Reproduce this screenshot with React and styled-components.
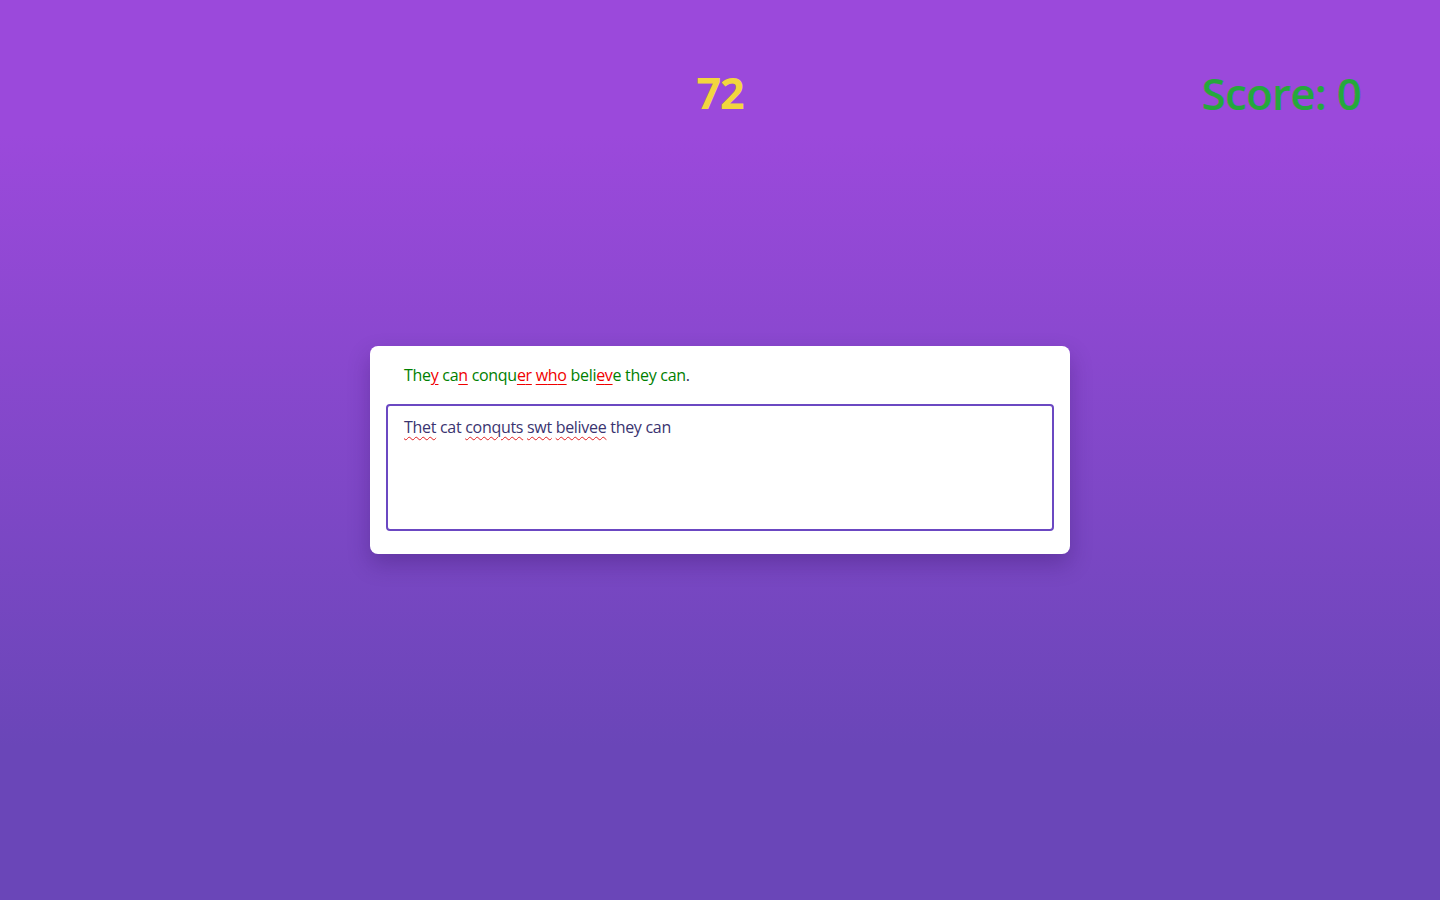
import React from "react";
import styled, { createGlobalStyle } from "styled-components";

const GlobalStyle = createGlobalStyle`
  * {
    box-sizing: border-box;
  }
  body {
    margin: 0;
    font-family: "Open Sans", "Noto Sans", sans-serif;
    color: #333;
  }
`

const Page = styled.div`
  min-height: 100vh;
  display: grid;
  grid-template-rows: 1fr auto 1fr;
  justify-items: center;
  background: linear-gradient(to bottom, #9b49db 15%, #6a46b8 83%);
`

const Header = styled.header`
  align-self: start;
  width: 100%;
  display: grid;
  grid-template-columns: 1fr auto 1fr;
  align-items: center;
  padding: 64px 80px 0;
`

const Timer = styled.div`
  grid-column: 2;
  font-size: 43px;
  font-weight: 700;
  line-height: 58px;
  letter-spacing: -1px;
  color: #f2d63f;
`

const Score = styled.div`
  justify-self: end;
  margin-right: -1px;
  font-size: 44px;
  font-weight: 600;
  line-height: 58px;
  letter-spacing: -0.8px;
  color: #25a83c;
`

const Card = styled.div`
  width: 700px;
  background: #fff;
  border-radius: 8px;
  padding: 16px 16px 23px;
  box-shadow: 0 10px 22px rgba(40, 10, 80, 0.28);
`

const Quote = styled.div`
  padding: 0 18px;
  margin-bottom: 16px;
  font-size: 16px;
  line-height: 26px;
  letter-spacing: -0.3px;
  color: #2f2b55;
`

const Char = styled.span`
  color: ${(p) => (p.$state === "correct" ? "#008000" : p.$state === "wrong" ? "#f00000" : "inherit")};
  text-decoration: ${(p) => (p.$state === "wrong" ? "underline" : "none")};
  text-underline-offset: 3px;
`

const InputBox = styled.div`
  height: 127px;
  border: 2px solid #6b48c2;
  border-radius: 4px;
  padding: 9px 16px;
  font-size: 16px;
  line-height: 24px;
  letter-spacing: -0.3px;
  color: #3a3470;
`

const Word = styled.span`
  text-decoration: ${(p) => (p.$misspelled ? "underline wavy #e02020" : "none")};
  text-decoration-thickness: 1px;
  text-underline-offset: 3px;
`

const quote = "They can conquer who believe they can.";
const typed = "Thet cat conquts swt belivee they can";
const misspelled = ["Thet", "conquts", "swt", "belivee"];

export default function App() {
  const words = typed.split(" ");
  return (
    <>
      <GlobalStyle />
      <Page>
        <Header>
          <Timer>72</Timer>
          <Score>Score: 0</Score>
        </Header>
        <Card>
          <Quote>
            {quote.split("").map((c, i) => {
              let state = "none";
              if (i < typed.length) state = typed[i] === c ? "correct" : "wrong";
              return (
                <Char key={i} $state={state}>
                  {c}
                </Char>
              );
            })}
          </Quote>
          <InputBox>
            {words.map((w, i) => (
              <React.Fragment key={i}>
                <Word $misspelled={misspelled.includes(w)}>{w}</Word>
                {i < words.length - 1 ? " " : ""}
              </React.Fragment>
            ))}
          </InputBox>
        </Card>
      </Page>
    </>
  );
}
